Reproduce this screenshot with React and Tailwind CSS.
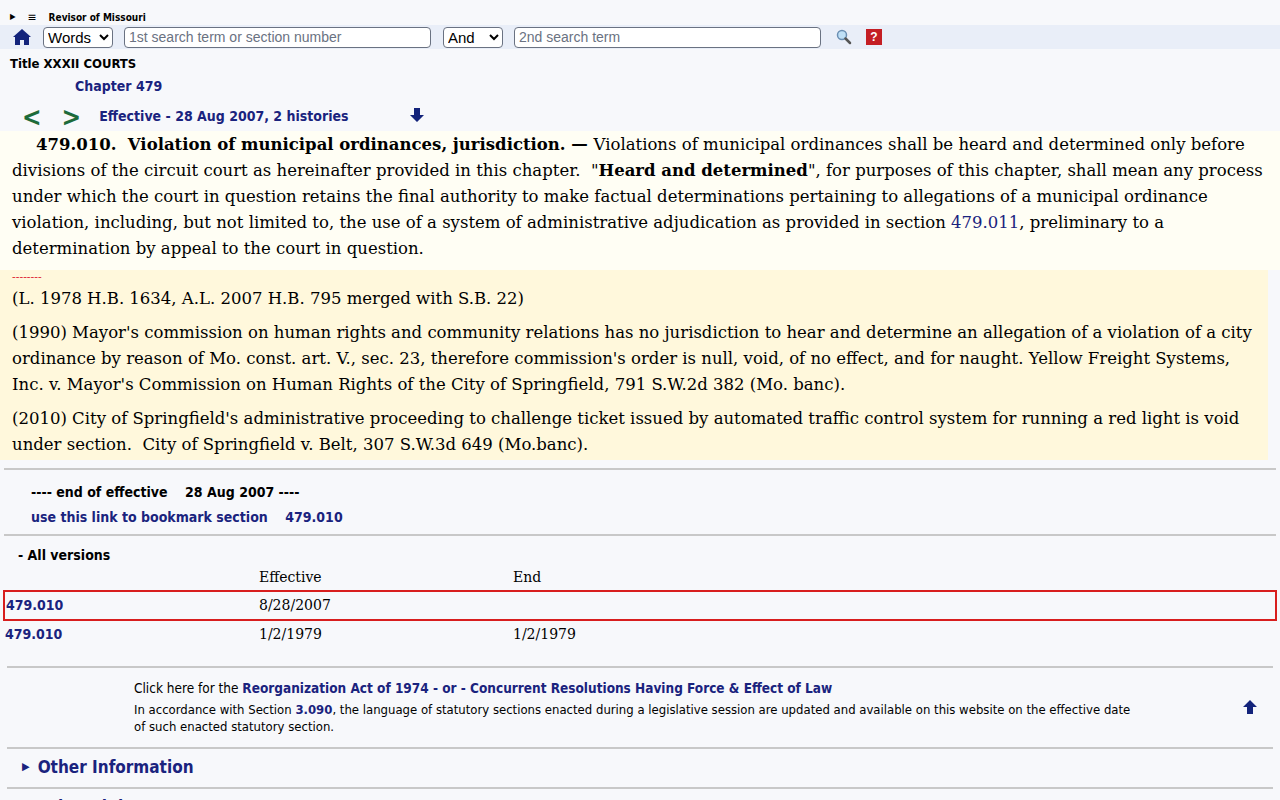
import React from 'react';

const sans = { fontFamily: '"DejaVu Sans Condensed", "Liberation Sans", sans-serif' };
const ui = { fontFamily: '"Liberation Sans", Arial, sans-serif' };
const serif = { fontFamily: '"DejaVu Serif", "Liberation Serif", serif' };

const A = ({ children, className = '' }) => (
  <a className={`text-[#1a237e] ${className}`}>{children}</a>
);

const App = () => {
  return (
    <div className="min-h-[800px] bg-[#f7f8fb] text-black" style={sans}>
      {/* top bar */}
      <div className="flex items-center gap-3 px-[10px] pt-[9px] h-[25px] text-[10px] font-bold">
        <span className="text-[8px]">▶</span>
        <span className="text-[12px] font-normal">≡</span>
        <span>Revisor of Missouri</span>
      </div>
      <div className="flex items-center h-[24px] bg-[#e9eef8] pl-[12px]" style={ui}>
        <svg width="20" height="18" viewBox="0 0 20 18">
          <path d="M10 1 L1 9 L3 9 L3 17 L8 17 L8 12 L12 12 L12 17 L17 17 L17 9 L19 9 Z" fill="#13237b" />
        </svg>
        <select className="ml-[11px] w-[70px] h-[21px] border border-gray-500 bg-white text-[15px] rounded-sm">
          <option>Words</option>
        </select>
        <input className="ml-[11px] w-[307px] h-[21px] border border-gray-500 bg-white px-1 text-[14px] placeholder:text-gray-500 rounded-sm" placeholder="1st search term or section number" />
        <select className="ml-[12px] w-[60px] h-[21px] border border-gray-500 bg-white text-[15px] rounded-sm">
          <option>And</option>
        </select>
        <input className="ml-[11px] w-[307px] h-[21px] border border-gray-500 bg-white px-1 text-[14px] placeholder:text-gray-500 rounded-sm" placeholder="2nd search term" />
        <svg className="ml-[15px]" width="16" height="16" viewBox="0 0 16 16">
          <circle cx="6" cy="6" r="4.5" fill="#bfe0f7" stroke="#6b8fb3" strokeWidth="1.5" />
          <path d="M9.5 9.5 L14 14" stroke="#555" strokeWidth="2.5" strokeLinecap="round" />
        </svg>
        <span className="ml-[14px] w-[16px] h-[16px] bg-[#c41e24] text-white text-[12px] font-bold flex items-center justify-center">?</span>
      </div>

      <div className="px-[10px] pt-[5px] text-[13px] font-bold">Title XXXII COURTS</div>
      <div className="pl-[75px] pt-[2px] text-[14px] font-bold text-[#1a237e]">Chapter 479</div>
      <div className="flex items-center pl-[22px] pt-[6px] h-[34px]">
        <span className="text-[#1d6b3a] text-[26px] font-bold leading-none">&lt;</span>
        <span className="ml-[20px] text-[#1d6b3a] text-[26px] font-bold leading-none">&gt;</span>
        <span className="ml-[18px] text-[14px] font-bold text-[#1a237e]">Effective - 28 Aug 2007, 2 histories</span>
        <svg className="ml-[60px] -mt-[4px]" width="16" height="16" viewBox="0 0 16 16">
          <path d="M5 1 H11 V8 H15 L8 15 L1 8 H5 Z" fill="#13237b" />
        </svg>
      </div>

      <div className="text-[16.5px] leading-[26px]" style={serif}>
        <div className="bg-[#fffef4] px-[12px] pt-[1px] pb-[8px]">
          <span className="pl-[24px] font-bold">479.010.&nbsp; Violation of municipal ordinances, jurisdiction. — </span>
          Violations of municipal ordinances shall be heard and determined only before divisions of the circuit court as hereinafter provided in this chapter.&nbsp; "<b>Heard and determined</b>", for purposes of this chapter, shall mean any process under which the court in question retains the final authority to make factual determinations pertaining to allegations of a municipal ordinance violation, including, but not limited to, the use of a system of administrative adjudication as provided in section <A>479.011</A>, preliminary to a determination by appeal to the court in question.
        </div>
        <div className="bg-[#fff8dc] px-[12px] pb-[2px] mr-[12px]">
          <div className="text-[#d23] text-[11px] leading-[16px]">--------</div>
          <p className="mb-[8px]">(L. 1978 H.B. 1634, A.L. 2007 H.B. 795 merged with S.B. 22)</p>
          <p className="mb-[8px]">(1990) Mayor's commission on human rights and community relations has no jurisdiction to hear and determine an allegation of a violation of a city ordinance by reason of Mo. const. art. V., sec. 23, therefore commission's order is null, void, of no effect, and for naught. Yellow Freight Systems, Inc. v. Mayor's Commission on Human Rights of the City of Springfield, 791 S.W.2d 382 (Mo. banc).</p>
          <p>(2010) City of Springfield's administrative proceeding to challenge ticket issued by automated traffic control system for running a red light is void under section.&nbsp; City of Springfield v. Belt, 307 S.W.3d 649 (Mo.banc).</p>
        </div>
      </div>

      <hr className="mx-[4px] mt-[8px] border-t-2 border-[#c8c8c8]" />
      <div className="pl-[31px] pt-[12px] text-[14px] font-bold">---- end of effective &nbsp;&nbsp; 28 Aug 2007 ----</div>
      <div className="pl-[31px] pt-[4px] text-[14px] font-bold text-[#1a237e]">use this link to bookmark section &nbsp;&nbsp; 479.010</div>
      <hr className="mx-[4px] mt-[6px] border-t-2 border-[#c8c8c8]" />
      <div className="pl-[18px] pt-[9px] text-[14px] font-bold">- All versions</div>
      <div className="text-[14px]" style={serif}>
        <div className="flex h-[24px] items-center pl-[259px]">
          <span className="w-[254px]">Effective</span><span>End</span>
        </div>
        <div className="flex h-[31px] items-center mx-[3px] border-2 border-[#d81e1e]">
          <span className="w-[254px] pl-[1px] font-bold text-[#1a237e]" style={sans}>479.010</span>
          <span>8/28/2007</span>
        </div>
        <div className="flex h-[28px] items-center pl-[5px]">
          <span className="w-[254px] font-bold text-[#1a237e]" style={sans}>479.010</span>
          <span className="w-[254px]">1/2/1979</span>
          <span>1/2/1979</span>
        </div>
      </div>
      <hr className="mx-[7px] mt-[17px] border-t-2 border-[#c8c8c8]" />
      <div className="flex items-center pl-[134px] pr-[22px] pt-[12px] pb-[12px] text-[13px] leading-[17px]">
        <div className="w-[1010px]">
          <div className="text-[13.5px] pb-[4px]">Click here for the <b className="text-[#1a237e]">Reorganization Act of 1974 - or - Concurrent Resolutions Having Force &amp; Effect of Law</b></div>
          <div>In accordance with Section <b className="text-[#1a237e]">3.090</b>, the language of statutory sections enacted during a legislative session are updated and available on this website on the effective date of such enacted statutory section.</div>
        </div>
        <svg className="ml-auto" width="16" height="16" viewBox="0 0 16 16">
          <path d="M5 15 H11 V8 H15 L8 1 L1 8 H5 Z" fill="#13237b" />
        </svg>
      </div>
      <hr className="mx-[7px] border-t-2 border-[#c8c8c8]" />
      <div className="flex items-center pl-[22px] h-[38px] text-[17px] font-bold text-[#1a237e]">
        <span className="text-[11px] mr-[8px]">▶</span>Other Information
      </div>
      <hr className="mx-[7px] border-t-2 border-[#c8c8c8]" />
      <div className="flex items-center pl-[22px] h-[38px] text-[17px] font-bold text-[#1a237e]">
        <span className="text-[11px] mr-[8px]">▶</span>Other Links
      </div>
    </div>
  );
};

export default App;
